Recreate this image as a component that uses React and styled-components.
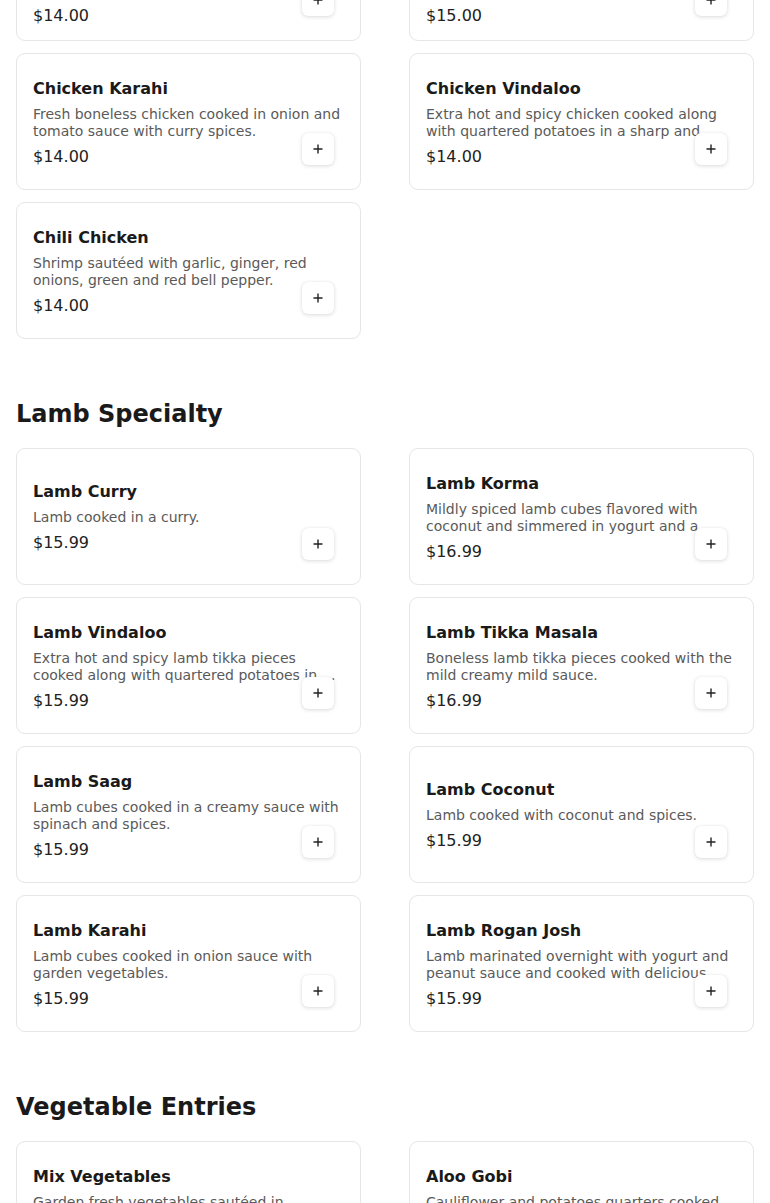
import React from 'react';
import styled, { createGlobalStyle } from 'styled-components';

const GlobalStyle = createGlobalStyle`
    html, body {
        margin: 0;
        padding: 0;
        background: #ffffff;
        font-family: "DejaVu Sans", "Noto Sans", sans-serif;
        color: #1a1a1a;
    }
    * {
        box-sizing: border-box;
    }
`

const Page = styled.main`
    width: 770px;
    height: 1203px;
    overflow: hidden;
    padding: 0 16px;
`

const Section = styled.section`
    margin-top: ${({ $first }) => ($first ? '0' : '59px')};
`

const Heading = styled.h2`
    margin: 0 0 18px 0;
    font-size: 24px;
    line-height: 32px;
    font-weight: 700;
    color: #1a1a1a;
`

const Grid = styled.div`
    display: grid;
    grid-template-columns: 1fr 1fr;
    column-gap: 48px;
    row-gap: 12px;
    margin-top: ${({ $offset }) => $offset || 0}px;
`

const Card = styled.div`
    position: relative;
    height: 137px;
    border: 1px solid #e6e6e6;
    border-radius: 9px;
    background: #ffffff;
    padding: 2px 16px 0;
    display: flex;
    flex-direction: column;
    justify-content: center;
`

const Name = styled.h3`
    margin: 0 0 5px 0;
    font-size: 16px;
    line-height: 24px;
    font-weight: 700;
    color: #1a1a1a;
`

const Description = styled.p`
    margin: 0;
    font-size: 14px;
    line-height: 17px;
    color: #5a5a5a;
    display: -webkit-box;
    -webkit-box-orient: vertical;
    -webkit-line-clamp: ${({ $lines }) => $lines || 2};
    overflow: hidden;
`

const Price = styled.div`
    margin-top: 5px;
    font-size: 16px;
    line-height: 24px;
    color: #222222;
`

const AddButton = styled.button`
    position: absolute;
    right: 26px;
    bottom: 24px;
    width: 32px;
    height: 32px;
    border: none;
    border-radius: 6px;
    background: #ffffff;
    box-shadow: 0 1px 4px rgba(0, 0, 0, 0.14), 0 0 1px rgba(0, 0, 0, 0.1);
    display: flex;
    align-items: center;
    justify-content: center;
    padding: 0;
    cursor: pointer;

    svg {
        width: 12px;
        height: 12px;
    }
`

const PlusIcon = () => (
    <svg viewBox="0 0 12 12" fill="none">
        <path d="M6 1.5v9M1.5 6h9" stroke="#222" strokeWidth="1.4" />
    </svg>
)

const sections = [
    {
        offset: -96,
        items: [
            { name: 'Chicken Madras', desc: 'Chicken cooked with coconut, mustard seeds, curry leaves and a blend of hot south Indian spices and cooked until tender.', price: '$14.00', lines: 3 },
            { name: 'Chicken Tikka Masala', desc: 'Boneless chicken tikka pieces roasted in the clay oven and cooked in a rich creamy tomato sauce with mild spices.', price: '$15.00', lines: 3 },
            { name: 'Chicken Karahi', desc: 'Fresh boneless chicken cooked in onion and tomato sauce with curry spices.', price: '$14.00' },
            { name: 'Chicken Vindaloo', desc: 'Extra hot and spicy chicken cooked along with quartered potatoes in a sharp and tangy sauce.', price: '$14.00' },
            { name: 'Chili Chicken', desc: 'Shrimp sautéed with garlic, ginger, red onions, green and red bell pepper.', price: '$14.00' },
        ],
    },
    {
        title: 'Lamb Specialty',
        items: [
            { name: 'Lamb Curry', desc: 'Lamb cooked in a curry.', price: '$15.99' },
            { name: 'Lamb Korma', desc: 'Mildly spiced lamb cubes flavored with coconut and simmered in yogurt and a nutty cream sauce.', price: '$16.99' },
            { name: 'Lamb Vindaloo', desc: 'Extra hot and spicy lamb tikka pieces cooked along with quartered potatoes in a sharp sauce.', price: '$15.99' },
            { name: 'Lamb Tikka Masala', desc: 'Boneless lamb tikka pieces cooked with the mild creamy mild sauce.', price: '$16.99' },
            { name: 'Lamb Saag', desc: 'Lamb cubes cooked in a creamy sauce with spinach and spices.', price: '$15.99' },
            { name: 'Lamb Coconut', desc: 'Lamb cooked with coconut and spices.', price: '$15.99' },
            { name: 'Lamb Karahi', desc: 'Lamb cubes cooked in onion sauce with garden vegetables.', price: '$15.99' },
            { name: 'Lamb Rogan Josh', desc: 'Lamb marinated overnight with yogurt and peanut sauce and cooked with delicious spices.', price: '$15.99' },
        ],
    },
    {
        title: 'Vegetable Entries',
        items: [
            { name: 'Mix Vegetables', desc: 'Garden fresh vegetables sautéed in traditional spices and herbs.', price: '$12.99' },
            { name: 'Aloo Gobi', desc: 'Cauliflower and potatoes quarters cooked with onion, tomato and spices.', price: '$12.99' },
        ],
    },
]

function MenuCard({ item }) {
    return (
        <Card>
            <Name>{item.name}</Name>
            <Description $lines={item.lines}>{item.desc}</Description>
            <Price>{item.price}</Price>
            <AddButton aria-label={`Add ${item.name}`}>
                <PlusIcon />
            </AddButton>
        </Card>
    )
}

function App() {
    return (
        <>
            <GlobalStyle />
            <Page>
                {sections.map((section, i) => (
                    <Section key={i} $first={i === 0}>
                        {section.title && <Heading>{section.title}</Heading>}
                        <Grid $offset={section.offset}>
                            {section.items.map((item) => (
                                <MenuCard key={item.name} item={item} />
                            ))}
                        </Grid>
                    </Section>
                ))}
            </Page>
        </>
    )
}

export default App
